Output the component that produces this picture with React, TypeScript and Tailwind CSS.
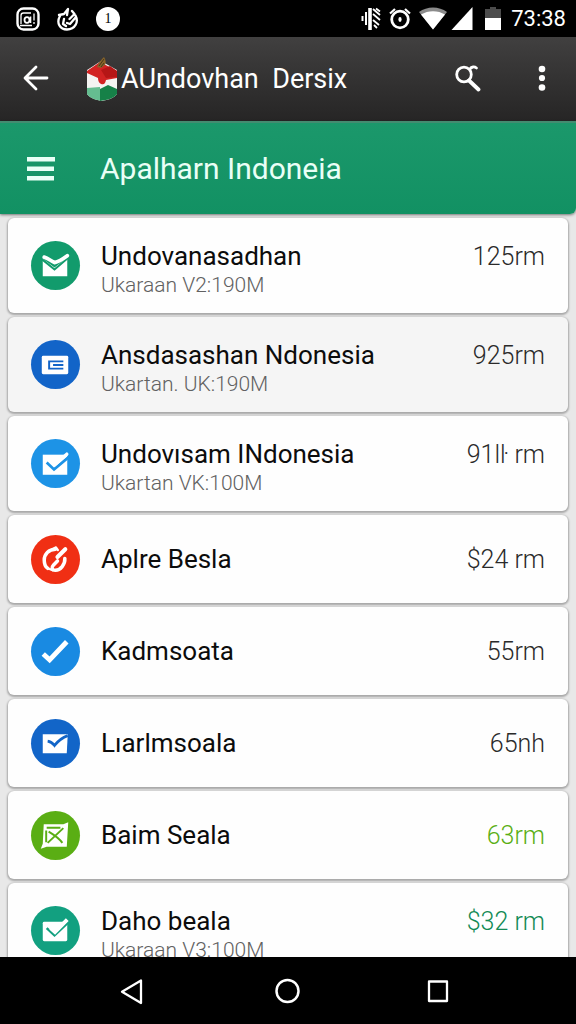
import React from "react";

type Row = {
  title: string;
  detail?: string;
  value: string;
  disc: string;
  tone: string;
  surface: string;
  icon: React.ReactNode;
};

const rows: Row[] = [
  {
    title: "Undovanasadhan",
    detail: "Ukaraan V2:190M",
    value: "125rm",
    disc: "bg-[#129b6c] text-[#129b6c]",
    tone: "text-[#2a2a2a]",
    surface: "bg-[#fefefe]",
    icon: (
      <>
        <path d="M11 18l12 9 13-10v19H11z" fill="#fff" />
        <path d="M10 18.500l13 10.500L37 17" fill="none" stroke="currentColor" strokeWidth="2" />
        <path d="M12.500 16.500c4 1 7 4 10.500 5.500C28 21 32 18 36 15" fill="none" stroke="#fff" strokeWidth="3.800" strokeLinecap="round" />
      </>
    ),
  },
  {
    title: "Ansdasashan Ndonesia",
    detail: "Ukartan. UK:190M",
    value: "925rm",
    disc: "bg-[#1264c8] text-[#1264c8]",
    tone: "text-[#2a2a2a]",
    surface: "bg-[#f5f5f5]",
    icon: (
      <>
        <rect x="10" y="16" width="27" height="19" rx="1.500" fill="#fff" />
        <path d="M32 21.800H17.500v7.400H32M21.500 25.500H32" fill="none" stroke="currentColor" strokeWidth="2" />
      </>
    ),
  },
  {
    title: "Undovısam INdonesia",
    detail: "Ukartan VK:100M",
    value: "91lŀ rm",
    disc: "bg-[#1d93e6] text-[#1d93e6]",
    tone: "text-[#2a2a2a]",
    surface: "bg-[#fefefe]",
    icon: (
      <>
        <path d="M11 16h25v20.500H11z" fill="#fff" />
        <path d="M15 24l7.500 7L38 18" fill="none" stroke="currentColor" strokeWidth="2.800" />
        <path d="M23 26.500L35.500 15.500" fill="none" stroke="#fff" strokeWidth="3.500" strokeLinecap="round" />
      </>
    ),
  },
  {
    title: "Aplre Besla",
    value: "$24 rm",
    disc: "bg-[#f02f14] text-[#f02f14]",
    tone: "text-[#2a2a2a]",
    surface: "bg-[#fefefe]",
    icon: (
      <g fill="none" stroke="#fff" strokeLinecap="round" strokeLinejoin="round">
        <path d="M24 14.500c-7 0-11.500 5-11.500 11 0 4 1 7 3.500 8.500M33.500 24c.500 6-4.500 12-9.500 12-4 0-4.500-3-2-5.500l4-4" strokeWidth="3.600" />
        <path d="M34 14.500L26 22.500" strokeWidth="4.200" />
        <path d="M20 15l4.500-2.500 2 3M16 34l5 2" strokeWidth="2.200" />
      </g>
    ),
  },
  {
    title: "Kadmsoata",
    value: "55rm",
    disc: "bg-[#198ae2] text-[#198ae2]",
    tone: "text-[#2a2a2a]",
    surface: "bg-[#fefefe]",
    icon: <path d="M11.500 27.500l6.500 6L35.500 15" fill="none" stroke="#fff" strokeWidth="5" />,
  },
  {
    title: "Lıarlmsoala",
    value: "65nh",
    disc: "bg-[#1265c8] text-[#1265c8]",
    tone: "text-[#2a2a2a]",
    surface: "bg-[#fefefe]",
    icon: (
      <>
        <path d="M11 15.500h25.500L35.500 35H11z" fill="#fff" />
        <path d="M16 22.500c3 .500 5 2 7 4.500 4-5 8-8 13.500-10" fill="none" stroke="currentColor" strokeWidth="2.800" />
      </>
    ),
  },
  {
    title: "Baim Seala",
    value: "63rm",
    disc: "bg-[#5aae14] text-[#5aae14]",
    tone: "text-[#5aae14]",
    surface: "bg-[#fefefe]",
    icon: (
      <>
        <path d="M12 13.500h20l5-2L35.500 36.500H15l-6 2 2-5z" fill="#fff" />
        <path d="M15 17h14M16 32.500l16-15M17 21c5 3 11 7 14 11.500M14.500 20v12" fill="none" stroke="currentColor" strokeWidth="2" />
      </>
    ),
  },
  {
    title: "Daho beala",
    detail: "Ukaraan V3:100M",
    value: "$32 rm",
    disc: "bg-[#12a080] text-[#12a080]",
    tone: "text-[#128a55]",
    surface: "bg-[#fefefe]",
    icon: (
      <>
        <rect x="11" y="16" width="25" height="20" rx="1.500" fill="#fff" />
        <path d="M15 22.500l8 7.500L39 15" fill="none" stroke="currentColor" strokeWidth="2.500" />
        <path d="M19 22.500l4.500 4L36 14" fill="none" stroke="#fff" strokeWidth="4" />
      </>
    ),
  },
];

function StatusBar() {
  return (
    <div className="flex h-[37px] shrink-0 items-center bg-black pr-2.5 pl-4 text-white">
      <div className="flex items-center gap-4">
        <svg className="size-6" viewBox="0 0 24 24" fill="none" stroke="#fff" aria-hidden="true">
          <rect x="1.500" y="1.500" width="21" height="21" rx="6" strokeWidth="2.400" />
          <path d="M5 17V8.500c0-1.500 1-2.500 2.500-2.500H15M18 6.500v7M18 15v2" strokeWidth="1.300" />
          <ellipse cx="11" cy="13" rx="2.500" ry="2.800" strokeWidth="1.800" />
          <path d="M14.500 9.500V16M4 18.500h12" strokeWidth="1.600" />
        </svg>
        <svg className="size-6" viewBox="0 0 24 24" fill="none" stroke="#fff" strokeWidth="2.300" strokeLinecap="round" strokeLinejoin="round" aria-hidden="true">
          <path d="M4 9c-4 7 0 13.500 7 13.500C19 22.500 23 15 19.500 8.500M3 8l5-1 4-5-1 6M16 4l2.500 3-5 5M8 12l-1 5 3 2M20 10l-6 7-3-1" />
        </svg>
        <span className="flex size-6 items-center justify-center rounded-full bg-white font-['Liberation_Serif',serif] text-sm text-black">1</span>
      </div>
      <div className="ml-auto flex items-center">
        <svg className="mr-2 h-6 w-5" viewBox="0 0 20 24" fill="none" stroke="#fff" aria-hidden="true">
          <path d="M1.500 9v5" strokeWidth="2" />
          <path d="M5 5v13" strokeWidth="2" />
          <path d="M9 1v22" strokeWidth="3.600" />
          <path d="M12 2l7 6M12 7l7 6M12 13l6 5M15 1.500l4 3M13 18l3 3" strokeWidth="1.800" />
        </svg>
        <svg className="mr-2 h-6 w-[22px]" viewBox="0 0 22 24" fill="none" stroke="#fff" aria-hidden="true">
          <circle cx="11" cy="12.500" r="8.300" strokeWidth="2.800" />
          <path d="M1 6.500L6 2M21 6.500L16 2" strokeWidth="2.200" />
          <ellipse cx="11" cy="12.500" rx="1.600" ry="2.400" fill="#fff" stroke="none" />
        </svg>
        <svg className="mr-1 h-6 w-7" viewBox="0 0 28 24" aria-hidden="true">
          <path d="M0 5C8-1 20-1 28 5L14 22.500z" fill="#8b8b8b" />
          <path d="M2 7.500C9 3 19 3 26 7.500L14 22.500z" fill="#fff" />
        </svg>
        <svg className="mr-3 h-6 w-[22px]" viewBox="0 0 22 24" aria-hidden="true">
          <path d="M21.500 0v23H.500z" fill="#fff" />
        </svg>
        <svg className="mr-2.5 h-6 w-4" viewBox="0 0 16 24" aria-hidden="true">
          <path d="M0 2h5V0h6v2h5v10H0z" fill="#4c4c4c" />
          <path d="M0 11h16v12H0z" fill="#fff" />
        </svg>
        <span className="text-[22px] leading-6">73:38</span>
      </div>
    </div>
  );
}

function Crest() {
  return (
    <svg className="h-11 w-[30px]" viewBox="0 0 30 44" aria-hidden="true">
      <path d="M0 13L14 4l16 9v24c-3 4-9 6-15 7C9 43 3 41 0 37z" fill="#f4f4f2" />
      <path d="M0 14L13 5l17 9v7l-11 2c-1 4-2 5-5 4-2-1-3-3-3-6L0 16z" fill="#d22323" />
      <path d="M14 13l9-4 7 5v6l-11 1z" fill="#b51616" />
      <path d="M0 31l13-1v13.500C8 43 3 41 0 37z" fill="#65bd90" />
      <path d="M13 32l8-4 9 4v5c-3 4-9 6-17 7z" fill="#168148" />
      <path d="M10 10c1-4 4-7 7-10 2 3 2 6 1 8l-4 3z" fill="#88642a" />
      <path d="M12 9l5-7M14 10l3-4" stroke="#463719" strokeWidth="1" />
    </svg>
  );
}

function RowCard({ row }: { row: Row }) {
  return (
    <li className={`flex shrink-0 items-center rounded-md pr-[23px] pl-[23px] shadow-[0_1px_2px_1px_rgba(0,0,0,0.28)] ${row.detail ? "h-[95px]" : "h-[88px]"} ${row.surface}`}>
      <span className={`mr-[21px] flex size-[49px] shrink-0 rounded-full ${row.disc}`}>
        <svg className="size-[49px]" viewBox="0 0 48 50" aria-hidden="true">{row.icon}</svg>
      </span>
      <div className={`min-w-0 flex-1 ${row.detail ? "pt-[5px]" : ""}`}>
        <div className="flex items-baseline justify-between">
          <h2 className="text-[26px] leading-8 text-[#0c0c0c]">{row.title}</h2>
          <span className={`text-[25px] leading-8 font-light whitespace-pre ${row.tone}`}>{row.value}</span>
        </div>
        {row.detail && <p className="text-[21px] leading-6 font-light text-[#616161]">{row.detail}</p>}
      </div>
    </li>
  );
}

export default function App() {
  return (
    <div className="flex h-screen flex-col overflow-hidden bg-[#e8e8e8] font-[Roboto,sans-serif]">
      <StatusBar />
      <header className="flex h-21 shrink-0 items-center bg-linear-to-b from-[#414040] to-[#262525] pr-6 pl-[23px] text-white">
        <button type="button" aria-label="Back" className="mr-[38px]">
          <svg className="h-7 w-[26px]" viewBox="0 0 25 28" fill="none" stroke="#fff" strokeWidth="2.800" strokeLinecap="round" strokeLinejoin="round">
            <path d="M23.500 13H2M12.500 2L1.500 13l11 11" />
          </svg>
        </button>
        <Crest />
        <h1 className="ml-1 text-[27px] leading-9 whitespace-pre">AUndovhan  Dersix</h1>
        <button type="button" aria-label="Search" className="ml-auto">
          <svg className="h-7 w-[26px]" viewBox="0 0 26 28" fill="none" stroke="#fff" strokeLinecap="round">
            <circle cx="9" cy="9.500" r="7.300" strokeWidth="2.800" />
            <path d="M14 15.500l9.500 9" strokeWidth="3.800" />
            <path d="M15 4c1.500-2.500 4.500-2.500 6.500-1" strokeWidth="2.800" />
          </svg>
        </button>
        <button type="button" aria-label="More options" className="ml-[51px]">
          <svg className="h-7 w-5" viewBox="0 0 20 28" fill="#fff">
            <circle cx="10" cy="4" r="3.300" />
            <circle cx="10" cy="13" r="3.100" />
            <circle cx="10" cy="22.500" r="3.300" />
          </svg>
        </button>
      </header>
      <nav className="flex h-[93px] shrink-0 items-center rounded-br-md border-t-2 border-[#438c70] bg-linear-to-b from-[#1b986b] to-[#129163] pl-[26px] text-[#e9fff6] shadow-[0_1px_3px_rgba(0,0,0,0.5)]">
        <button type="button" aria-label="Menu" className="mr-[45px]">
          <svg className="h-7 w-[29px]" viewBox="0 0 29 28" fill="currentColor">
            <rect x="1" y="2" width="28" height="4.500" />
            <rect x="1" y="11.500" width="27" height="4.500" />
            <rect x="1" y="21" width="27" height="4.500" />
          </svg>
        </button>
        <span className="text-[30px] leading-9">Apalharn Indoneia</span>
      </nav>
      <main className="min-h-0 flex-1 overflow-y-auto px-2 pt-1 [scrollbar-width:none]">
        <ul className="flex flex-col gap-1">
          {rows.map((row) => (
            <RowCard key={row.title} row={row} />
          ))}
        </ul>
      </main>
      <footer className="grid h-[67px] shrink-0 grid-cols-[1fr_28px_1fr] items-center gap-[122px] bg-black">
        <button type="button" aria-label="Back" className="justify-self-end">
          <svg className="h-7 w-8" viewBox="0 0 32 28" fill="none" stroke="#fff" strokeWidth="2.300" strokeLinejoin="round">
            <path d="M21 3.500V26L2 14.700z" />
          </svg>
        </button>
        <button type="button" aria-label="Home">
          <svg className="size-7" viewBox="0 0 28 28" fill="none" stroke="#fff" strokeWidth="2.500">
            <circle cx="13.500" cy="14" r="11" />
          </svg>
        </button>
        <button type="button" aria-label="Recent apps" className="justify-self-start">
          <svg className="size-7" viewBox="0 0 28 28" fill="none" stroke="#fff" strokeWidth="2.300" strokeLinejoin="round">
            <rect x="5" y="4.500" width="18" height="19.500" />
          </svg>
        </button>
      </footer>
    </div>
  );
}
